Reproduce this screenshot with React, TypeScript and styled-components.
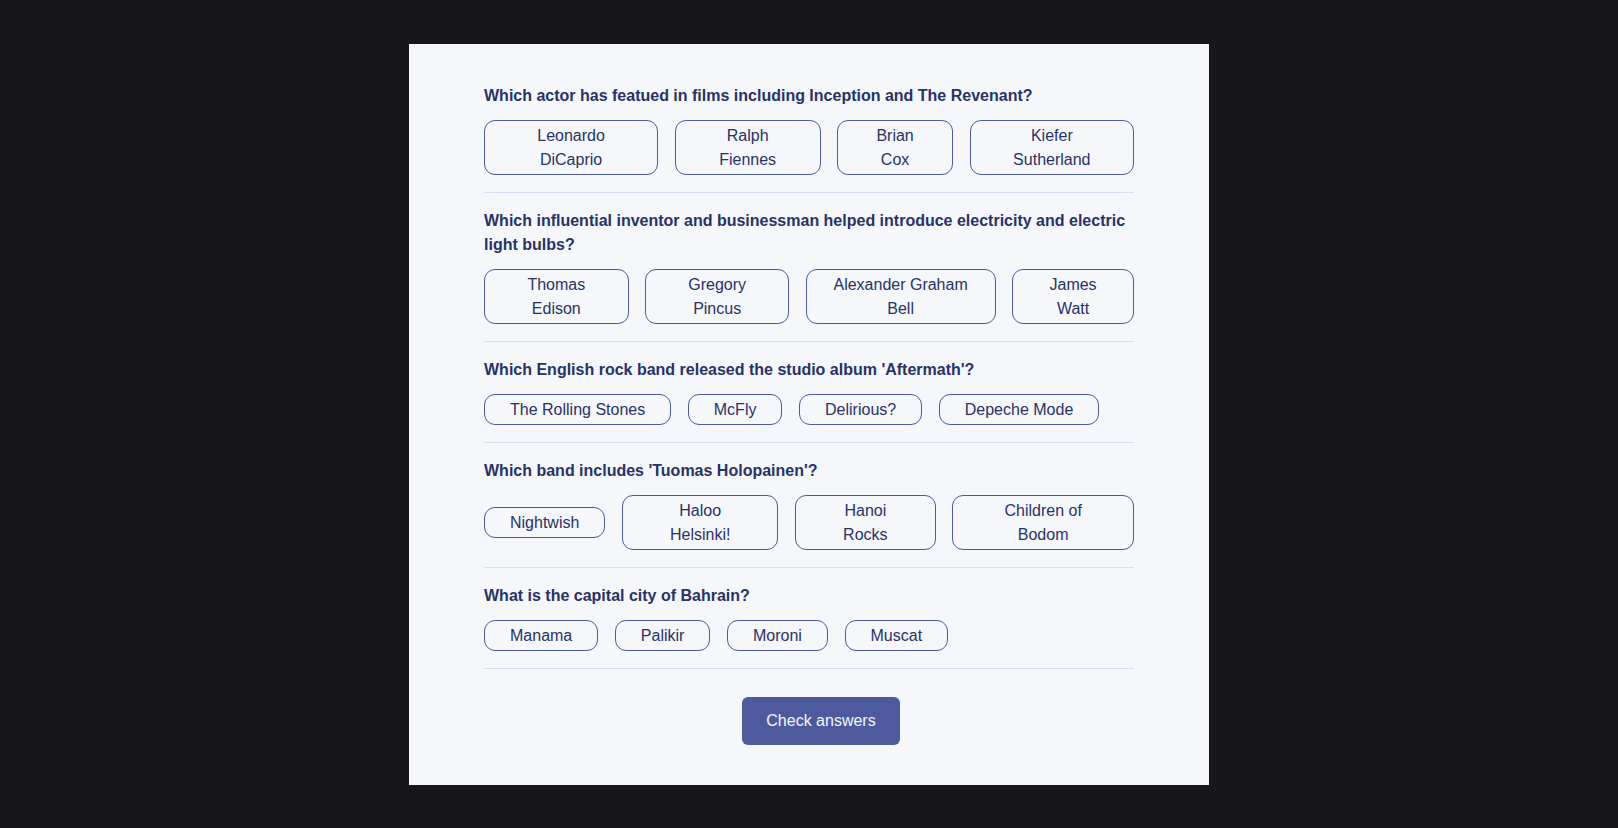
import React from "react";
import styled, { createGlobalStyle } from "styled-components";

const GlobalStyle = createGlobalStyle`
  * { box-sizing: border-box; }
  html, body { margin: 0; padding: 0; }
  body {
    background: #18181b;
    font-family: "Liberation Sans", Arial, sans-serif;
    color: #293264;
  }
`;

const Page = styled.main`
  min-height: 100vh;
  display: flex;
  align-items: center;
  justify-content: center;
`;

const Card = styled.section`
  width: 800px;
  background: #f5f7fb;
  padding: 24px 75px 40px;
  display: flex;
  flex-direction: column;
`;

const QuestionBlock = styled.div`
  padding: 16px 0 16.5px;
  border-bottom: 1px solid #dbdef0;
`;

const QuestionText = styled.h2`
  margin: 0 0 12.5px;
  font-size: 16px;
  line-height: 24px;
  font-weight: 700;
  color: #293264;
`;

const AnswerRow = styled.div`
  display: flex;
  align-items: center;
  gap: 16.6px;
`;

const AnswerButton = styled.button<{ $selected?: boolean }>`
  flex: 0 1 auto;
  font-family: "Liberation Sans", Arial, sans-serif;
  font-size: 16px;
  line-height: 24px;
  font-weight: 400;
  color: #293264;
  background: ${(p) => (p.$selected ? "#d6dbf5" : "transparent")};
  border: 1px solid #4d5b9e;
  border-radius: 11px;
  padding: 2.5px 25px;
  text-align: center;
  cursor: pointer;
`;

const Footer = styled.div`
  display: flex;
  justify-content: center;
  padding-top: 28px;
`;

const CheckButton = styled.button`
  margin-left: 24px;
  height: 48px;
  padding: 0 24px;
  border: none;
  border-radius: 6px;
  background: #4d5b9e;
  color: #f5f7fb;
  font-family: "Liberation Sans", Arial, sans-serif;
  font-size: 16px;
  font-weight: 400;
  cursor: pointer;
`;

const questions: { q: string; answers: string[] }[] = [
  {
    q: "Which actor has featued in films including Inception and The Revenant?",
    answers: ["Leonardo DiCaprio", "Ralph Fiennes", "Brian Cox", "Kiefer Sutherland"],
  },
  {
    q: "Which influential inventor and businessman helped introduce electricity and electric light bulbs?",
    answers: ["Thomas Edison", "Gregory Pincus", "Alexander Graham Bell", "James Watt"],
  },
  {
    q: "Which English rock band released the studio album 'Aftermath'?",
    answers: ["The Rolling Stones", "McFly", "Delirious?", "Depeche Mode"],
  },
  {
    q: "Which band includes 'Tuomas Holopainen'?",
    answers: ["Nightwish", "Haloo Helsinki!", "Hanoi Rocks", "Children of Bodom"],
  },
  {
    q: "What is the capital city of Bahrain?",
    answers: ["Manama", "Palikir", "Moroni", "Muscat"],
  },
];

export default function App() {
  return (
    <>
      <GlobalStyle />
      <Page>
        <Card>
          {questions.map((item) => (
            <QuestionBlock key={item.q}>
              <QuestionText>{item.q}</QuestionText>
              <AnswerRow>
                {item.answers.map((a) => (
                  <AnswerButton key={a} type="button">
                    {a}
                  </AnswerButton>
                ))}
              </AnswerRow>
            </QuestionBlock>
          ))}
          <Footer>
            <CheckButton type="button">Check answers</CheckButton>
          </Footer>
        </Card>
      </Page>
    </>
  );
}
